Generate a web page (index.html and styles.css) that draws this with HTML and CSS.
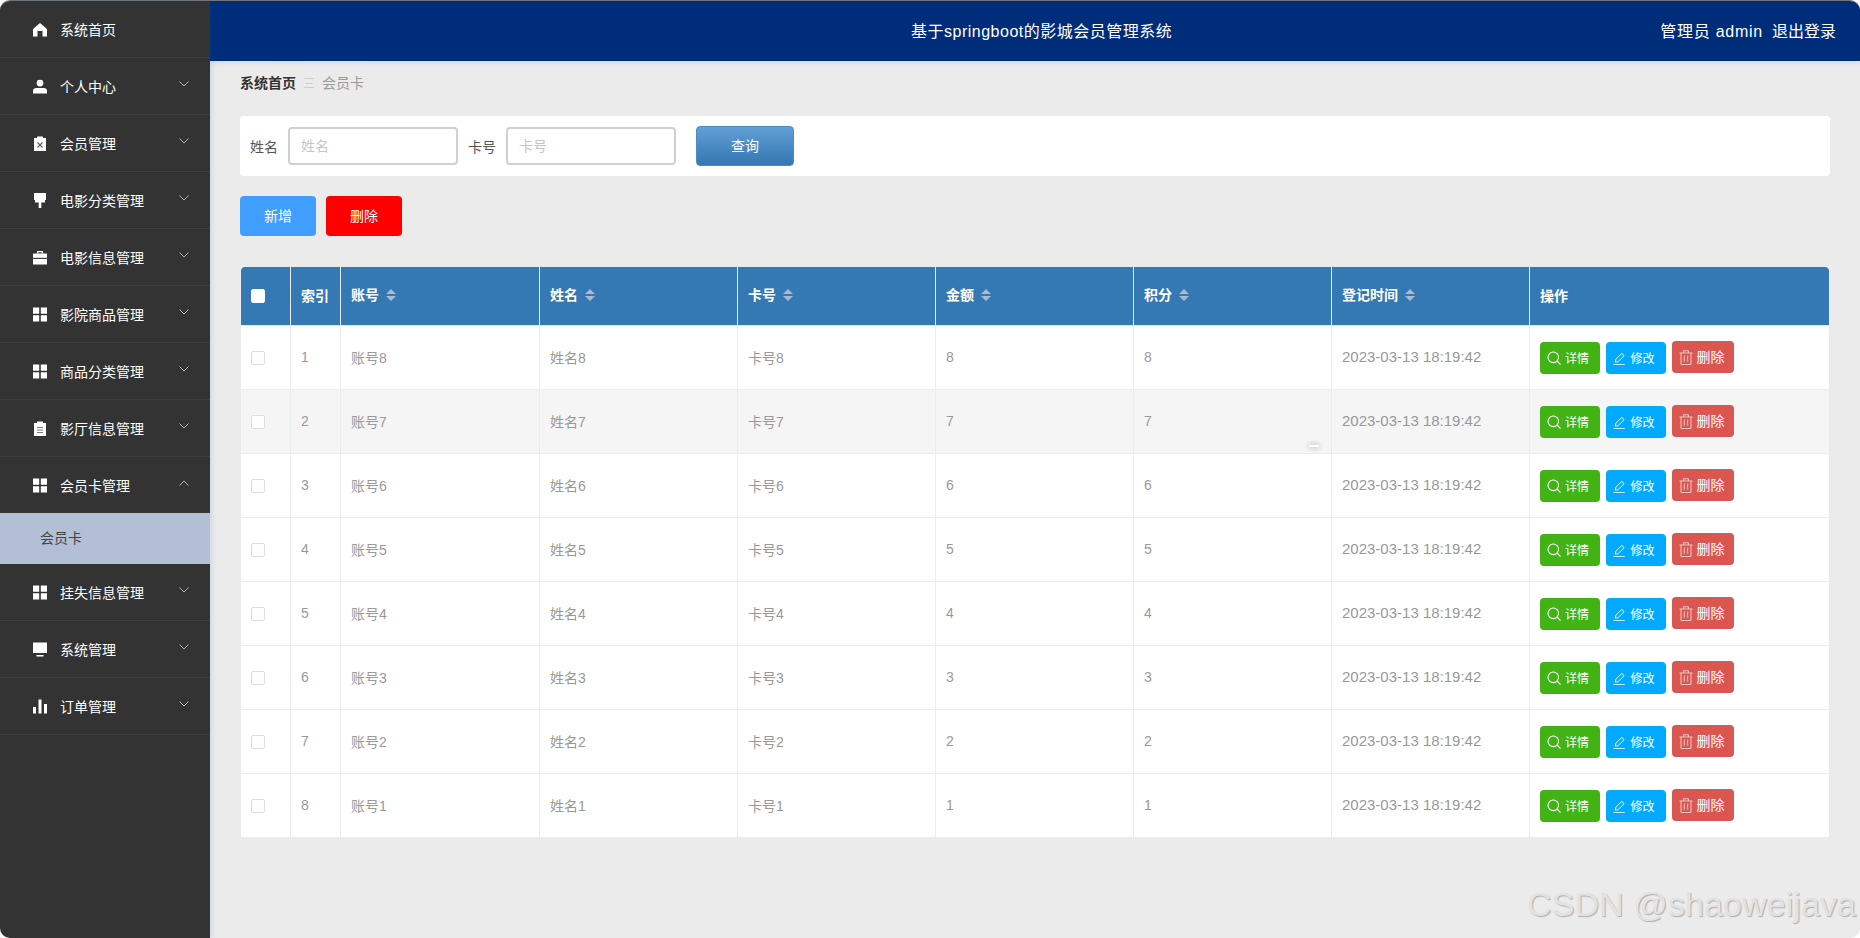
FILE: index.html
```html
<!DOCTYPE html>
<html lang="zh-CN">
<head>
<meta charset="utf-8">
<title>基于springboot的影城会员管理系统</title>
<link rel="stylesheet" href="styles.css">
</head>
<body>
<svg class="defs" width="0" height="0" aria-hidden="true">
  <defs>
    <symbol id="i-home" viewBox="0 0 14 14"><path d="M7 0.5 L14 6.5 V14 H9.5 V8.5 H4.5 V14 H0 V6.5 Z"/></symbol>
    <symbol id="i-user" viewBox="0 0 14 14"><circle cx="7" cy="3.6" r="3.4"/><path d="M0 14 V11.5 Q0 8.5 3.5 8.5 H10.5 Q14 8.5 14 11.5 V14 Z"/></symbol>
    <symbol id="i-clipx" viewBox="0 0 14 15"><path d="M1 2 H4 V0.5 H10 V2 H13 V15 H1 Z"/><path d="M4.5 6.5 L9.5 11.5 M9.5 6.5 L4.5 11.5" stroke="#5a5a6a" stroke-width="1.1" fill="none"/></symbol>
    <symbol id="i-brush" viewBox="0 0 14 15"><path d="M1 0 H13 V7 H12 V9.5 H8.3 V15 H5.7 V9.5 H2 V7 H1 Z"/></symbol>
    <symbol id="i-case" viewBox="0 0 14 14"><path d="M4 3 V0.5 H10 V3 H8.8 V1.7 H5.2 V3 Z"/><path d="M0 3 H14 V7.3 H0 Z"/><path d="M0 8.4 H14 V14 H0 Z"/></symbol>
    <symbol id="i-grid" viewBox="0 0 14 14"><path d="M0 0 H6.2 V6.2 H0 Z M7.8 0 H14 V6.2 H7.8 Z M0 7.8 H6.2 V14 H0 Z M7.8 7.8 H14 V14 H7.8 Z"/></symbol>
    <symbol id="i-list" viewBox="0 0 14 15"><path d="M1 2 H4 V0.5 H10 V2 H13 V15 H1 Z"/><path d="M4 6.5 H10 M4 9 H10 M4 11.5 H10" stroke="#77777f" stroke-width="1" fill="none"/></symbol>
    <symbol id="i-screen" viewBox="0 0 14 14"><path d="M0 0 H14 V10.5 H0 Z M3.5 12.6 H10.5 V14 H3.5 Z"/></symbol>
    <symbol id="i-chart" viewBox="0 0 14 14"><path d="M0 7.5 H3 V14 H0 Z M5.5 0 H8.5 V14 H5.5 Z M11 4.5 H14 V14 H11 Z"/></symbol>
    <symbol id="i-down" viewBox="0 0 10 6"><path d="M0.5 0.5 L5 5 L9.5 0.5" fill="none" stroke="currentColor" stroke-width="1"/></symbol>
    <symbol id="i-up" viewBox="0 0 10 6"><path d="M0.5 5.5 L5 1 L9.5 5.5" fill="none" stroke="currentColor" stroke-width="1"/></symbol>
    <symbol id="i-sort" viewBox="0 0 10 12"><path d="M5 0 L10 5 H0 Z M0 7 H10 L5 12 Z"/></symbol>
    <symbol id="i-search" viewBox="0 0 14 14"><circle cx="6.3" cy="6.3" r="5.3" fill="none" stroke="currentColor" stroke-width="1.1"/><path d="M10 10 L13.5 13.5" fill="none" stroke="currentColor" stroke-width="1.1"/></symbol>
    <symbol id="i-edit" viewBox="0 0 14 14"><path d="M2.5 11 L3 8 L9.5 1.5 L12 4 L5.5 10.5 Z M0.5 13.5 H12.5" fill="none" stroke="currentColor" stroke-width="1"/></symbol>
    <symbol id="i-trash" viewBox="0 0 14 15"><path d="M0.5 3 H13.5 M4.5 3 V0.8 H9.5 V3 M2 3 V14.5 H12 V3 M5.3 5.5 V12 M8.7 5.5 V12" fill="none" stroke="currentColor" stroke-width="1"/></symbol>
  </defs>
</svg>

<div class="app">
  <aside class="sidebar">
    <nav>
      <a class="menu-item"><svg class="menu-icon"><use href="#i-home"/></svg><span>系统首页</span></a>
      <a class="menu-item"><svg class="menu-icon"><use href="#i-user"/></svg><span>个人中心</span><svg class="chevron"><use href="#i-down"/></svg></a>
      <a class="menu-item"><svg class="menu-icon"><use href="#i-clipx"/></svg><span>会员管理</span><svg class="chevron"><use href="#i-down"/></svg></a>
      <a class="menu-item"><svg class="menu-icon"><use href="#i-brush"/></svg><span>电影分类管理</span><svg class="chevron"><use href="#i-down"/></svg></a>
      <a class="menu-item"><svg class="menu-icon"><use href="#i-case"/></svg><span>电影信息管理</span><svg class="chevron"><use href="#i-down"/></svg></a>
      <a class="menu-item"><svg class="menu-icon"><use href="#i-grid"/></svg><span>影院商品管理</span><svg class="chevron"><use href="#i-down"/></svg></a>
      <a class="menu-item"><svg class="menu-icon"><use href="#i-grid"/></svg><span>商品分类管理</span><svg class="chevron"><use href="#i-down"/></svg></a>
      <a class="menu-item"><svg class="menu-icon"><use href="#i-list"/></svg><span>影厅信息管理</span><svg class="chevron"><use href="#i-down"/></svg></a>
      <a class="menu-item menu-open"><svg class="menu-icon"><use href="#i-grid"/></svg><span>会员卡管理</span><svg class="chevron"><use href="#i-up"/></svg></a>
      <a class="submenu-item">会员卡</a>
      <a class="menu-item"><svg class="menu-icon"><use href="#i-grid"/></svg><span>挂失信息管理</span><svg class="chevron"><use href="#i-down"/></svg></a>
      <a class="menu-item"><svg class="menu-icon"><use href="#i-screen"/></svg><span>系统管理</span><svg class="chevron"><use href="#i-down"/></svg></a>
      <a class="menu-item"><svg class="menu-icon"><use href="#i-chart"/></svg><span>订单管理</span><svg class="chevron"><use href="#i-down"/></svg></a>
    </nav>
  </aside>

  <div class="main">
    <header class="topbar">
      <div class="title">基于springboot的影城会员管理系统</div>
      <div class="user">管理员 admin</div>
      <div class="logout">退出登录</div>
    </header>

    <div class="content">
      <div class="breadcrumb"><b>系统首页</b><i>三</i><span>会员卡</span></div>

      <form class="search">
        <label class="label">姓名</label>
        <input class="input" placeholder="姓名">
        <label class="label label-2">卡号</label>
        <input class="input" placeholder="卡号">
        <button type="button" class="btn-query">查询</button>
      </form>

      <div class="actions">
        <button type="button" class="btn-action btn-add">新增</button>
        <button type="button" class="btn-action btn-del">删除</button>
      </div>

      <table class="grid">
        <thead>
          <tr>
            <th class="c-check"><span class="box box-head"></span></th>
            <th class="c-index">索引</th>
            <th class="c-col c-first">账号<svg class="sort"><use href="#i-sort"/></svg></th>
            <th class="c-col">姓名<svg class="sort"><use href="#i-sort"/></svg></th>
            <th class="c-col">卡号<svg class="sort"><use href="#i-sort"/></svg></th>
            <th class="c-col">金额<svg class="sort"><use href="#i-sort"/></svg></th>
            <th class="c-col">积分<svg class="sort"><use href="#i-sort"/></svg></th>
            <th class="c-col">登记时间<svg class="sort"><use href="#i-sort"/></svg></th>
            <th class="c-ops">操作</th>
          </tr>
        </thead>
        <tbody>
          <tr><td><span class="box"></span></td><td>1</td><td>账号8</td><td>姓名8</td><td>卡号8</td><td>8</td><td>8</td><td class="date">2023-03-13 18:19:42</td><td><div class="ops"><a class="op op-view"><svg class="op-icon"><use href="#i-search"/></svg>详情</a><a class="op op-edit"><svg class="op-icon"><use href="#i-edit"/></svg>修改</a><a class="op op-del"><svg class="op-icon"><use href="#i-trash"/></svg>删除</a></div></td></tr>
          <tr class="row-hover"><td><span class="box"></span></td><td>2</td><td>账号7</td><td>姓名7</td><td>卡号7</td><td>7</td><td>7</td><td class="date">2023-03-13 18:19:42</td><td><div class="ops"><a class="op op-view"><svg class="op-icon"><use href="#i-search"/></svg>详情</a><a class="op op-edit"><svg class="op-icon"><use href="#i-edit"/></svg>修改</a><a class="op op-del"><svg class="op-icon"><use href="#i-trash"/></svg>删除</a></div></td></tr>
          <tr><td><span class="box"></span></td><td>3</td><td>账号6</td><td>姓名6</td><td>卡号6</td><td>6</td><td>6</td><td class="date">2023-03-13 18:19:42</td><td><div class="ops"><a class="op op-view"><svg class="op-icon"><use href="#i-search"/></svg>详情</a><a class="op op-edit"><svg class="op-icon"><use href="#i-edit"/></svg>修改</a><a class="op op-del"><svg class="op-icon"><use href="#i-trash"/></svg>删除</a></div></td></tr>
          <tr><td><span class="box"></span></td><td>4</td><td>账号5</td><td>姓名5</td><td>卡号5</td><td>5</td><td>5</td><td class="date">2023-03-13 18:19:42</td><td><div class="ops"><a class="op op-view"><svg class="op-icon"><use href="#i-search"/></svg>详情</a><a class="op op-edit"><svg class="op-icon"><use href="#i-edit"/></svg>修改</a><a class="op op-del"><svg class="op-icon"><use href="#i-trash"/></svg>删除</a></div></td></tr>
          <tr><td><span class="box"></span></td><td>5</td><td>账号4</td><td>姓名4</td><td>卡号4</td><td>4</td><td>4</td><td class="date">2023-03-13 18:19:42</td><td><div class="ops"><a class="op op-view"><svg class="op-icon"><use href="#i-search"/></svg>详情</a><a class="op op-edit"><svg class="op-icon"><use href="#i-edit"/></svg>修改</a><a class="op op-del"><svg class="op-icon"><use href="#i-trash"/></svg>删除</a></div></td></tr>
          <tr><td><span class="box"></span></td><td>6</td><td>账号3</td><td>姓名3</td><td>卡号3</td><td>3</td><td>3</td><td class="date">2023-03-13 18:19:42</td><td><div class="ops"><a class="op op-view"><svg class="op-icon"><use href="#i-search"/></svg>详情</a><a class="op op-edit"><svg class="op-icon"><use href="#i-edit"/></svg>修改</a><a class="op op-del"><svg class="op-icon"><use href="#i-trash"/></svg>删除</a></div></td></tr>
          <tr><td><span class="box"></span></td><td>7</td><td>账号2</td><td>姓名2</td><td>卡号2</td><td>2</td><td>2</td><td class="date">2023-03-13 18:19:42</td><td><div class="ops"><a class="op op-view"><svg class="op-icon"><use href="#i-search"/></svg>详情</a><a class="op op-edit"><svg class="op-icon"><use href="#i-edit"/></svg>修改</a><a class="op op-del"><svg class="op-icon"><use href="#i-trash"/></svg>删除</a></div></td></tr>
          <tr><td><span class="box"></span></td><td>8</td><td>账号1</td><td>姓名1</td><td>卡号1</td><td>1</td><td>1</td><td class="date">2023-03-13 18:19:42</td><td><div class="ops"><a class="op op-view"><svg class="op-icon"><use href="#i-search"/></svg>详情</a><a class="op op-edit"><svg class="op-icon"><use href="#i-edit"/></svg>修改</a><a class="op op-del"><svg class="op-icon"><use href="#i-trash"/></svg>删除</a></div></td></tr>
        </tbody>
      </table>
    </div>
  </div>

  <div class="cursor-mark"></div>
  <div class="watermark">CSDN @shaoweijava</div>
</div>
</body>
</html>
```

FILE: styles.css
```css
* { box-sizing: border-box; }
html, body { margin: 0; height: 100%; background: #fff; }
body {
  font-family: "Liberation Sans", "Noto Sans CJK SC", sans-serif;
  font-size: 14px;
  overflow: hidden;
}
.defs { position: absolute; }

.app {
  position: relative;
  display: flex;
  height: 938px;
  border-radius: 10px;
  overflow: hidden;
  background: #ebebeb;
  border-top: 1px solid #70757c;
}

/* sidebar */
.sidebar {
  flex: 0 0 210px;
  background: #333;
  box-shadow: 2px 0 5px rgba(0, 80, 190, .12);
  position: relative;
  z-index: 2;
}
.menu-item {
  display: flex;
  align-items: center;
  height: 57px;
  padding: 1px 0 0 33px;
  border-bottom: 1px solid #3f3f3f;
  color: #fff;
  line-height: 20px;
}
.menu-open { border-bottom: 0; height: 56px; }
.menu-icon { width: 14px; height: 15px; fill: #fff; margin-right: 13px; flex: none; }
.chevron {
  width: 10px;
  height: 6px;
  margin-left: auto;
  margin-right: 21px;
  margin-bottom: 5px;
  color: #b4b4b4;
}
.submenu-item {
  display: flex;
  align-items: center;
  height: 51px;
  padding: 0 0 3px 40px;
  background: #b3bfd5;
  color: #444;
}

/* main */
.main { flex: 1; min-width: 0; display: flex; flex-direction: column; }
.topbar {
  flex: none;
  display: flex;
  align-items: center;
  height: 60px;
  padding: 0 24px 2px 0;
  background: #002d7a;
  color: #fff;
  font-size: 16px;
  box-shadow: 0 2px 5px rgba(0, 80, 190, .1);
}
.title { margin-left: 701px; margin-right: auto; letter-spacing: .5px; }
.user { margin-right: 9px; letter-spacing: .75px; }

.content { flex: 1; padding: 0 30px; }
.breadcrumb {
  display: flex;
  align-items: center;
  height: 42px;
  color: #999;
}
.breadcrumb b { color: #333; }
.breadcrumb i { font-style: normal; color: #ccc; font-size: 12px; margin: 0 7px 0 7px; }

.search {
  display: flex;
  align-items: center;
  height: 60px;
  margin-top: 13px;
  padding-left: 10px;
  background: #fff;
  border-radius: 3px;
}
.label { color: #555; margin-right: 10px; }
.label-2 { margin-left: 10px; }
.input {
  width: 170px;
  height: 38px;
  padding: 0 11px;
  border: 2px solid #d0d0d0;
  border-radius: 4px;
  background: #fff;
  font: inherit;
}
.input::placeholder { color: #c4c6cc; opacity: 1; }
.btn-query {
  width: 98px;
  height: 40px;
  margin: -1px 0 0 20px;
  padding: 0 0 2px;
  border: 1px solid #4a8cc6;
  border-radius: 4px;
  background: linear-gradient(#629fd5, #3477b3);
  color: #fff;
  font: inherit;
}

.actions { display: flex; gap: 10px; margin-top: 20px; }
.btn-action {
  width: 76px;
  height: 40px;
  padding: 0 0 2px;
  border: 0;
  border-radius: 4px;
  color: #fff;
  font: inherit;
}
.btn-add { background: #409eff; }
.btn-del { background: #f00; }

/* table */
.grid {
  width: 1588px;
  margin: 31px 1px 0;
  border-collapse: separate;
  border-spacing: 0;
  table-layout: fixed;
  background: #fff;
}
.grid th {
  height: 59px;
  padding: 0 10px 3px;
  background: #3478b4;
  color: #fff;
  font-weight: bold;
  text-align: left;
  border-right: 1px solid #e4ebf2;
  border-bottom: 1px solid #e8e8e8;
}
.grid th:last-child { border-right: 0; border-top-right-radius: 4px; }
.grid th:first-child { border-top-left-radius: 4px; padding-bottom: 0; }
.c-check, .c-index { width: 50px; }
.grid .c-col { width: 198px; padding-bottom: 4px; }
.grid .c-first { width: 199px; }
.c-ops { width: 299px; }
.sort { width: 10px; height: 12px; margin-left: 7px; fill: #a9bccf; vertical-align: -1px; }
.grid td {
  height: 64px;
  padding: 0 10px 2px;
  color: #999;
  border-right: 1px solid #ededed;
  border-bottom: 1px solid #ededed;
}
.grid td:first-child, .grid td:last-child { padding-bottom: 0; }
.grid td:last-child { border-right: 0; }
.grid .row-hover td { background: #f5f5f5; }
.date { font-size: 15px; }
.box {
  display: block;
  width: 14px;
  height: 14px;
  border: 1px solid #ddd;
  border-radius: 2px;
  background: #fff;
}
.box-head { border-color: #fff; }

.ops { display: flex; align-items: flex-start; gap: 6px; color: #fff; }
.op {
  display: flex;
  align-items: center;
  justify-content: center;
  width: 60px;
  height: 32px;
  margin-top: 1px;
  padding: 0 4px 2px 0;
  border-radius: 4px;
  color: #fff;
  font-size: 12px;
}
.op-icon { width: 14px; height: 14px; margin: 2px 4px 0 0; flex: none; }
.op-view { background: #41b314; }
.op-edit { background: #0af; }
.op-edit .op-icon { width: 13px; height: 13px; }
.op-del {
  width: 62px;
  margin-top: 0;
  padding-right: 3px;
  background: #d95651;
  font-size: 14px;
}
.op-del .op-icon { color: #f3c4c2; height: 15px; }

/* overlays */
.cursor-mark {
  position: absolute;
  left: 1304px;
  top: 438px;
  width: 20px;
  height: 14px;
  background: radial-gradient(ellipse at center, rgba(0, 0, 0, .13), rgba(0, 0, 0, 0) 70%);
}
.cursor-mark::after {
  content: "";
  position: absolute;
  left: 5px;
  top: 6px;
  width: 10px;
  height: 2px;
  background: #fff;
}
.watermark {
  position: absolute;
  left: 1527px;
  top: 883px;
  font-size: 34px;
  line-height: 40px;
  letter-spacing: .1px;
  white-space: nowrap;
  color: #e2e2e2;
  text-shadow: 1px 1px 1px #adadad;
}
```
